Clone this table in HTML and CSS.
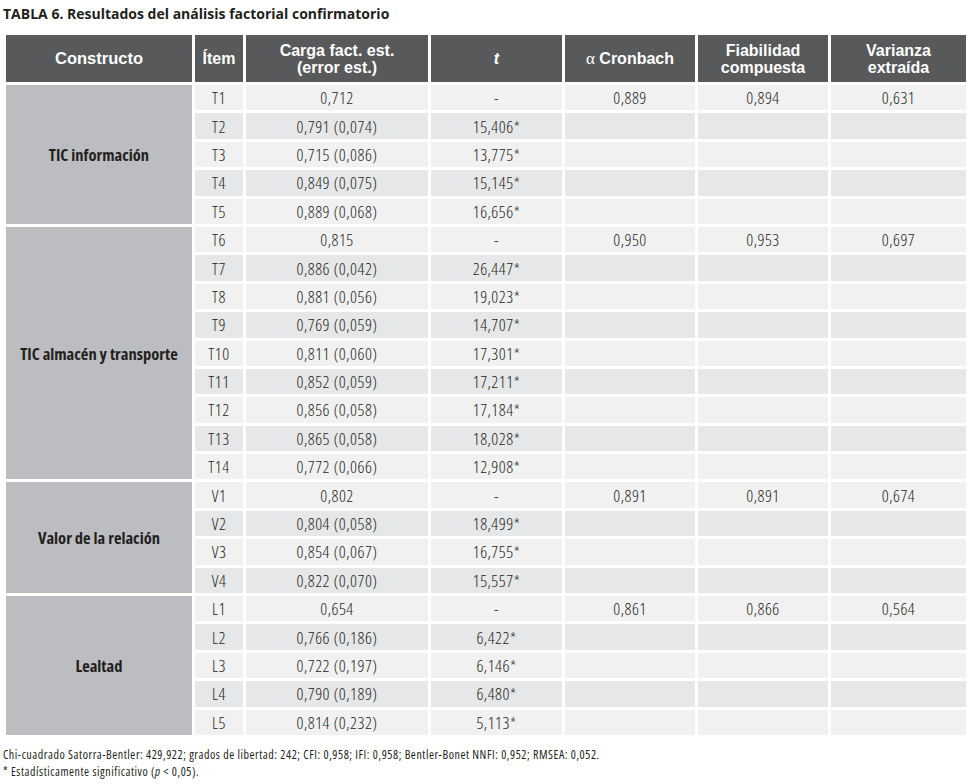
FILE: index.html
```
<!DOCTYPE html>
<html lang="es">
<head>
<meta charset="utf-8">
<link rel="stylesheet" href="styles.css">
</head>
<body>
<h1 class="title">TABLA 6. Resultados del análisis factorial confirmatorio</h1>
<table class="tbl">
<colgroup>
<col class="c1"><col class="c2"><col class="c3"><col class="c4"><col class="c5"><col class="c6"><col class="c7">
</colgroup>
<thead>
<tr class="hrow">
<th>Constructo</th><th>Ítem</th><th>Carga fact. est.<br>(error est.)</th><th><i>t</i></th><th><span class="alpha">α</span> Cronbach</th><th>Fiabilidad<br>compuesta</th><th>Varianza<br>extraída</th>
</tr>
</thead>
<tbody>
<tr class="odd"><td class="con" rowspan="5">TIC información</td><td>T1</td><td>0,712</td><td>-</td><td>0,889</td><td>0,894</td><td>0,631</td></tr>
<tr class="even"><td>T2</td><td>0,791 (0,074)</td><td>15,406*</td><td></td><td></td><td></td></tr>
<tr class="odd"><td>T3</td><td>0,715 (0,086)</td><td>13,775*</td><td></td><td></td><td></td></tr>
<tr class="even"><td>T4</td><td>0,849 (0,075)</td><td>15,145*</td><td></td><td></td><td></td></tr>
<tr class="odd"><td>T5</td><td>0,889 (0,068)</td><td>16,656*</td><td></td><td></td><td></td></tr>

<tr class="odd"><td class="con" rowspan="9">TIC almacén y transporte</td><td>T6</td><td>0,815</td><td>-</td><td>0,950</td><td>0,953</td><td>0,697</td></tr>
<tr class="even"><td>T7</td><td>0,886 (0,042)</td><td>26,447*</td><td></td><td></td><td></td></tr>
<tr class="odd"><td>T8</td><td>0,881 (0,056)</td><td>19,023*</td><td></td><td></td><td></td></tr>
<tr class="even"><td>T9</td><td>0,769 (0,059)</td><td>14,707*</td><td></td><td></td><td></td></tr>
<tr class="odd"><td>T10</td><td>0,811 (0,060)</td><td>17,301*</td><td></td><td></td><td></td></tr>
<tr class="even"><td>T11</td><td>0,852 (0,059)</td><td>17,211*</td><td></td><td></td><td></td></tr>
<tr class="odd"><td>T12</td><td>0,856 (0,058)</td><td>17,184*</td><td></td><td></td><td></td></tr>
<tr class="even"><td>T13</td><td>0,865 (0,058)</td><td>18,028*</td><td></td><td></td><td></td></tr>
<tr class="odd"><td>T14</td><td>0,772 (0,066)</td><td>12,908*</td><td></td><td></td><td></td></tr>

<tr class="odd"><td class="con" rowspan="4">Valor de la relación</td><td>V1</td><td>0,802</td><td>-</td><td>0,891</td><td>0,891</td><td>0,674</td></tr>
<tr class="even"><td>V2</td><td>0,804 (0,058)</td><td>18,499*</td><td></td><td></td><td></td></tr>
<tr class="odd"><td>V3</td><td>0,854 (0,067)</td><td>16,755*</td><td></td><td></td><td></td></tr>
<tr class="even"><td>V4</td><td>0,822 (0,070)</td><td>15,557*</td><td></td><td></td><td></td></tr>

<tr class="odd"><td class="con" rowspan="5">Lealtad</td><td>L1</td><td>0,654</td><td>-</td><td>0,861</td><td>0,866</td><td>0,564</td></tr>
<tr class="even"><td>L2</td><td>0,766 (0,186)</td><td>6,422*</td><td></td><td></td><td></td></tr>
<tr class="odd"><td>L3</td><td>0,722 (0,197)</td><td>6,146*</td><td></td><td></td><td></td></tr>
<tr class="even"><td>L4</td><td>0,790 (0,189)</td><td>6,480*</td><td></td><td></td><td></td></tr>
<tr class="odd"><td>L5</td><td>0,814 (0,232)</td><td>5,113*</td><td></td><td></td><td></td></tr>
</tbody>
</table>
<p class="note note1">Chi-cuadrado Satorra-Bentler: 429,922; grados de libertad: 242; CFI: 0,958; IFI: 0,958; Bentler-Bonet NNFI: 0,952; RMSEA: 0,052.</p>
<p class="note note2">* Estadísticamente significativo (<i>p</i> &lt; 0,05).</p>
</body>
</html>
```
FILE: styles.css
```
html, body {
  margin: 0;
  padding: 0;
  background: #ffffff;
}
body {
  font-family: "Open Sans", "DejaVu Sans Condensed", sans-serif;
  font-stretch: 75%;
  color: #231f20;
}
.title {
  margin: 0;
  padding: 5px 0 0 3px;
  height: 32px;
  box-sizing: border-box;
  font-size: 14px;
  font-stretch: 100%;
  font-weight: bold;
  line-height: 18px;
  color: #231f20;
}
.tbl {
  margin-left: 3px;
  border-collapse: separate;
  border-spacing: 3px;
  table-layout: fixed;
  width: 966px;
}
.c1 { width: 186px; }
.c2 { width: 48px; }
.c3 { width: 182px; }
.c4 { width: 131px; }
.c5 { width: 130px; }
.c6 { width: 130px; }
.c7 { width: 135px; }
.tbl th,
.tbl td {
  padding: 0;
  text-align: center;
  vertical-align: middle;
}
.hrow th {
  height: 47px;
  background: #58595b;
  color: #ffffff;
  font-family: "Liberation Sans", Arial, sans-serif;
  font-stretch: normal;
  font-weight: bold;
  font-size: 16px;
  line-height: 17px;
}
.hrow th:first-child {
  font-size: 16.5px;
}
.alpha {
  font-family: "Liberation Serif", serif;
  font-weight: normal;
  font-size: 17px;
}
.tbl tbody tr {
  height: 25.4px;
}
.tbl td {
  padding-top: 1px;
  font-size: 17px;
  font-weight: 300;
  letter-spacing: 0.5px;
  line-height: 18px;
  color: #231f20;
}
.odd td { background: #f1f1f2; }
.even td { background: #e6e7e8; }
.tbl td.con {
  background: #bcbdc0;
  font-weight: bold;
  font-size: 16.5px;
  letter-spacing: 0;
}
.note {
  margin: 0;
  padding-left: 3px;
  font-size: 12px;
  letter-spacing: 0.55px;
  line-height: 17px;
  color: #231f20;
}
.note1 {
  margin-top: 8px;
}
```
